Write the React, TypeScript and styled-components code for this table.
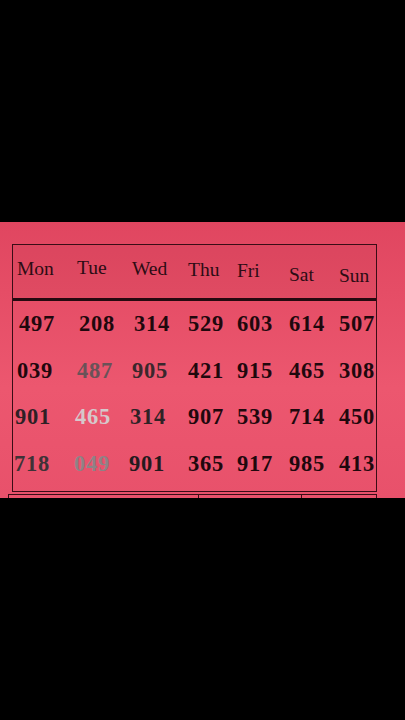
import React from "react";
import styled, { createGlobalStyle } from "styled-components";

const Global = createGlobalStyle`
  html, body { margin: 0; padding: 0; background: #000; }
  body { width: 405px; height: 720px; overflow: hidden; }
`;

const Page = styled.div`
  width: 405px;
  height: 720px;
  background: #000;
  display: flex;
  flex-direction: column;
`;

const TopBlack = styled.div`
  height: 222px;
  flex: none;
`;

const Paper = styled.div`
  height: 276px;
  flex: none;
  background: linear-gradient(180deg, #e04660 0%, #e54d66 25%, #ec576f 60%, #e8516b 100%);
  display: flex;
  flex-direction: column;
  padding-top: 22px;
  box-sizing: border-box;
  overflow: hidden;
`;

const Table = styled.div`
  margin-left: 12px;
  width: 365px;
  border: 1.5px solid #3a0d16;
  box-sizing: border-box;
  display: flex;
  flex-direction: column;
`;

const cols = "60px 55px 56px 49px 52px 50px 1fr";

const HeaderRow = styled.div`
  display: grid;
  grid-template-columns: ${cols};
  height: 56px;
  align-items: center;
  border-bottom: 3px solid #240a10;
  box-sizing: border-box;
  background: rgba(120, 20, 40, 0.05);
`;

const HeadCell = styled.div<{ $dy: number }>`
  padding-left: 4px;
  font-family: "Liberation Serif", "Times New Roman", serif;
  font-size: 19.5px;
  color: #2c0c14;
  transform: translateY(${(p) => p.$dy}px);
`;

const Body = styled.div`
  display: flex;
  flex-direction: column;
  padding-bottom: 4px;
`;

const Row = styled.div`
  display: grid;
  grid-template-columns: ${cols};
  height: 46.5px;
  align-items: center;
`;

const NumCell = styled.div<{ $c: string; $dx: number }>`
  padding-left: 4px;
  font-family: "Liberation Serif", "Times New Roman", serif;
  font-weight: 700;
  font-size: 22.5px;
  letter-spacing: 0.8px;
  color: ${(p) => p.$c};
  transform: translateX(${(p) => p.$dx}px);
`;

const NextTable = styled.div`
  margin-left: 8px;
  margin-top: 2px;
  width: 369px;
  height: 8px;
  border-top: 1.5px solid #3a0d16;
  border-left: 1.5px solid #3a0d16;
  border-right: 1.5px solid #3a0d16;
  box-sizing: border-box;
  display: grid;
  grid-template-columns: 190px 103px 1fr;
`;

const NextCell = styled.div`
  border-right: 1.5px solid #3a0d16;
  &:last-child { border-right: none; }
`;

const days = ["Mon", "Tue", "Wed", "Thu", "Fri", "Sat", "Sun"];
const headDy = [-3, -4, -3, -2, -1, 3, 4];

const D = "#1f080d";
const rows: { v: string; c: string }[][] = [
  [
    { v: "497", c: D }, { v: "208", c: D }, { v: "314", c: D }, { v: "529", c: D },
    { v: "603", c: D }, { v: "614", c: D }, { v: "507", c: D },
  ],
  [
    { v: "039", c: D }, { v: "487", c: "#6a5258" }, { v: "905", c: "#3a272c" }, { v: "421", c: D },
    { v: "915", c: D }, { v: "465", c: D }, { v: "308", c: D },
  ],
  [
    { v: "901", c: "#2e2025" }, { v: "465", c: "#d6c8cb" }, { v: "314", c: "#2e2226" }, { v: "907", c: D },
    { v: "539", c: D }, { v: "714", c: D }, { v: "450", c: D },
  ],
  [
    { v: "718", c: "#3e3237" }, { v: "049", c: "#8e8286" }, { v: "901", c: "#241a1e" }, { v: "365", c: D },
    { v: "917", c: D }, { v: "985", c: D }, { v: "413", c: D },
  ],
];
const rowDx = [2, 0, -2, -3];

export default function App() {
  return (
    <>
      <Global />
      <Page>
        <TopBlack />
        <Paper>
          <Table>
            <HeaderRow>
              {days.map((d, i) => (
                <HeadCell key={d} $dy={headDy[i]}>{d}</HeadCell>
              ))}
            </HeaderRow>
            <Body>
              {rows.map((r, ri) => (
                <Row key={ri}>
                  {r.map((cell, ci) => (
                    <NumCell key={ci} $c={cell.c} $dx={ci < 3 ? rowDx[ri] : 0}>
                      {cell.v}
                    </NumCell>
                  ))}
                </Row>
              ))}
            </Body>
          </Table>
          <NextTable>
            <NextCell />
            <NextCell />
            <NextCell />
          </NextTable>
        </Paper>
      </Page>
    </>
  );
}
